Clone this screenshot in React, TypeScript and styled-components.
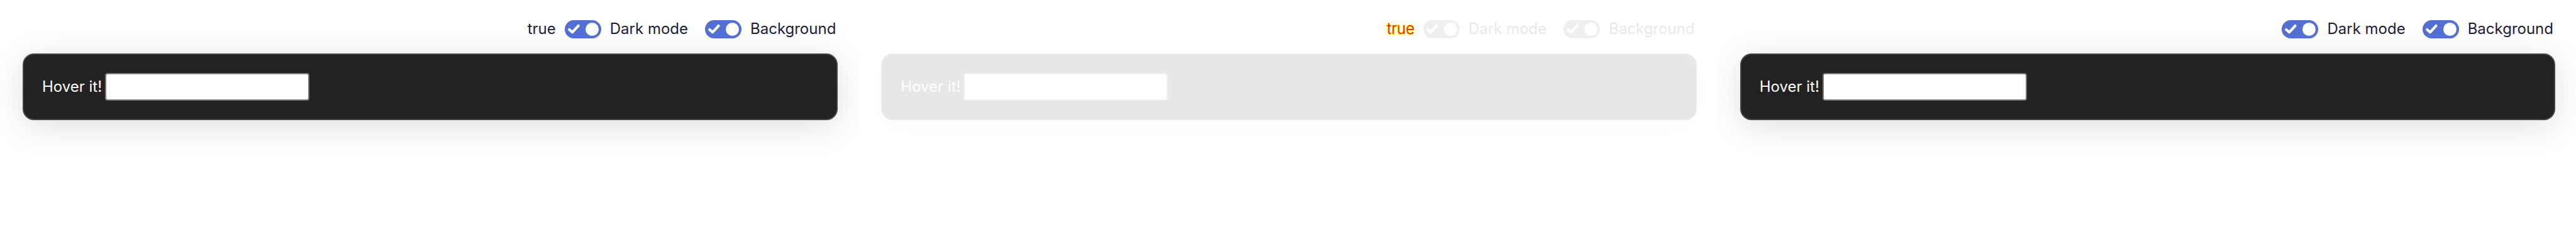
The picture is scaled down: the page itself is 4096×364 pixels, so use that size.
import React, { useId, useState } from "react";
import styled, { createGlobalStyle, css } from "styled-components";

const GlobalStyle = createGlobalStyle`
  *, *::before, *::after { box-sizing: border-box; }
  body {
    margin: 0;
    background: #fff;
    color: #1a1c3d;
    font-family: Inter, "Liberation Sans", sans-serif;
    font-size: 24px;
    line-height: 30px;
  }
`;

/* Unchanged parts of a comparison are shown washed out and colourless. */
const fade = css<{ $faded: boolean }>`
  ${(p) => p.$faded && "filter: grayscale(1); opacity: 0.1;"}
`;

const Comparison = styled.main`
  display: grid;
  grid-template-columns: repeat(3, minmax(0, 1fr));
  min-height: 100vh;
`;

const Pane = styled.section`
  overflow: hidden;
  padding: 31px 33px 0 36px;
`;

const Toolbar = styled.div`
  display: flex;
  align-items: center;
  justify-content: flex-end;
  padding-right: 3px;
  margin-bottom: 24px;
`;

const Status = styled.output<{ $changed: boolean }>`
  margin-right: 14px;
  ${(p) =>
    p.$changed &&
    "color: #f00; font-weight: 300; -webkit-text-stroke: 2px #ff0; paint-order: stroke fill;"}
`;

const Option = styled.label<{ $faded: boolean }>`
  display: flex;
  align-items: center;
  gap: 14px;
  cursor: pointer;
  & + & { margin-left: 27px; }
  ${fade}
`;

const SwitchBox = styled.span`
  position: relative;
  display: flex;
`;

const SwitchInput = styled.input`
  appearance: none;
  display: flex;
  width: 58px;
  height: 29px;
  margin: 0;
  padding: 4px;
  border-radius: 15px;
  background: #9a9ca8;
  cursor: pointer;
  &::before {
    content: "";
    width: 21px;
    height: 21px;
    border-radius: 50%;
    background: #fff;
  }
  &:checked {
    justify-content: flex-end;
    background: #526fd5;
  }
`;

const Tick = styled.svg`
  position: absolute;
  inset: 0;
  width: 58px;
  height: 29px;
  pointer-events: none;
  fill: none;
  stroke: #fff;
  stroke-width: 4.6;
  stroke-linecap: round;
  stroke-linejoin: round;
`;

const Card = styled.div<{ $faded: boolean }>`
  display: flex;
  align-items: center;
  gap: 5px;
  padding: 29px;
  border: 2px solid #444;
  border-radius: 18px;
  background: #222;
  color: #fff;
  box-shadow: 0 9px 54px rgba(0, 0, 0, 0.13);
  ${fade}
`;

const TextInput = styled.input`
  width: 325px;
  height: 44px;
  padding: 2px 4px;
  border: 2px solid #767676;
  border-radius: 4px;
  background: #fff;
  color: #000;
  font: inherit;
`;

function Switch({ label, faded }: { label: string; faded: boolean }) {
  const [on, setOn] = useState(true);
  return (
    <Option $faded={faded}>
      <SwitchBox>
        <SwitchInput
          type="checkbox"
          checked={on}
          onChange={(e) => setOn(e.target.checked)}
        />
        {on && (
          <Tick viewBox="0 0 64 32" aria-hidden="true">
            <path d="M8 16.5 13.2 21.3 23.7 10" />
          </Tick>
        )}
      </SwitchBox>
      {label}
    </Option>
  );
}

function Preview({ status, diff = false }: { status?: string; diff?: boolean }) {
  const id = useId();
  return (
    <Pane>
      <Toolbar>
        {status && <Status $changed={diff}>{status}</Status>}
        <Switch label="Dark mode" faded={diff} />
        <Switch label="Background" faded={diff} />
      </Toolbar>
      <Card $faded={diff}>
        <label htmlFor={id}>Hover it!</label>
        <TextInput id={id} type="text" />
      </Card>
    </Pane>
  );
}

export default function App() {
  return (
    <>
      <GlobalStyle />
      <Comparison>
        <Preview status="true" />
        <Preview status="true" diff />
        <Preview />
      </Comparison>
    </>
  );
}
